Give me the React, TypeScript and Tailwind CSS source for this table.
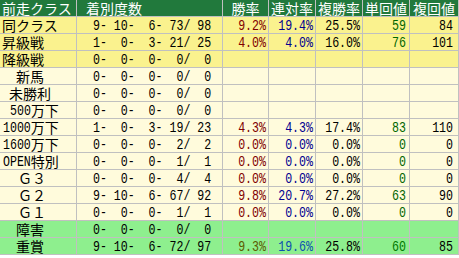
import React from 'react';

interface Row {
  label: string;
  pl: string;
  bg: string;
  rec: string;
  win?: string;
  ren?: string;
  fuku?: string;
  tan?: string;
  fk?: string;
  green?: boolean;
}

const zero = ' 0-  0-  0-  0/  0';

const rows: Row[] = [
  { label: '同クラス', pl: 'pl-[2px]', bg: 'bg-[#faf28e]', rec: ' 9- 10-  6- 73/ 98', win: '9.2%', ren: '19.4%', fuku: '25.5%', tan: '59', fk: '84' },
  { label: '昇級戦', pl: 'pl-[2px]', bg: 'bg-[#faf28e]', rec: ' 1-  0-  3- 21/ 25', win: '4.0%', ren: '4.0%', fuku: '16.0%', tan: '76', fk: '101' },
  { label: '降級戦', pl: 'pl-[2px]', bg: 'bg-[#faf28e]', rec: zero },
  { label: '新馬', pl: 'pl-[16px]', bg: 'bg-[#fffbdc]', rec: zero },
  { label: '未勝利', pl: 'pl-[9px]', bg: 'bg-[#fffbdc]', rec: zero },
  { label: '500万下', pl: 'pl-[10px]', bg: 'bg-[#fffbdc]', rec: zero },
  { label: '1000万下', pl: 'pl-[3px]', bg: 'bg-[#fffbdc]', rec: ' 1-  0-  3- 19/ 23', win: '4.3%', ren: '4.3%', fuku: '17.4%', tan: '83', fk: '110' },
  { label: '1600万下', pl: 'pl-[3px]', bg: 'bg-[#fffbdc]', rec: ' 0-  0-  0-  2/  2', win: '0.0%', ren: '0.0%', fuku: '0.0%', tan: '0', fk: '0' },
  { label: 'OPEN特別', pl: 'pl-[3px]', bg: 'bg-[#fffbdc]', rec: ' 0-  0-  0-  1/  1', win: '0.0%', ren: '0.0%', fuku: '0.0%', tan: '0', fk: '0' },
  { label: 'Ｇ３', pl: 'pl-[18px]', bg: 'bg-[#fffbdc]', rec: ' 0-  0-  0-  4/  4', win: '0.0%', ren: '0.0%', fuku: '0.0%', tan: '0', fk: '0' },
  { label: 'Ｇ２', pl: 'pl-[18px]', bg: 'bg-[#fffbdc]', rec: ' 9- 10-  6- 67/ 92', win: '9.8%', ren: '20.7%', fuku: '27.2%', tan: '63', fk: '90' },
  { label: 'Ｇ１', pl: 'pl-[18px]', bg: 'bg-[#fffbdc]', rec: ' 0-  0-  0-  1/  1', win: '0.0%', ren: '0.0%', fuku: '0.0%', tan: '0', fk: '0' },
  { label: '障害', pl: 'pl-[16px]', bg: 'bg-[#8eef8e]', rec: zero, green: true },
  { label: '重賞', pl: 'pl-[16px]', bg: 'bg-[#8eef8e]', rec: ' 9- 10-  6- 72/ 97', win: '9.3%', ren: '19.6%', fuku: '25.8%', tan: '60', fk: '85', green: true },
];

// fixed-width numbers, stretched a bit to look like the tall narrow original digits
function Mono({ text }: { text: string }) {
  return (
    <span className="inline-block whitespace-pre font-['Liberation_Mono',monospace] text-[11.6px] leading-[13px] scale-y-[1.25]">
      {text}
    </span>
  );
}

// half-width parts of a label in the fixed-width face, the rest as is
function Label({ text }: { text: string }) {
  return (
    <>
      {text.split(/([0-9A-Za-z]+)/).filter(Boolean).map((p, i) =>
        /^[0-9A-Za-z]+$/.test(p) ? <Mono key={i} text={p} /> : <span key={i}>{p}</span>
      )}
    </>
  );
}

const cols = 'grid grid-cols-[77px_146px_46px_47px_47px_47px_49px]';
const cell = 'h-[17px] border-r border-b border-[#c0c0c0] flex items-center whitespace-nowrap';

function App() {
  return (
    <div className="w-[459px] h-[258px] bg-white font-['Noto_Sans_CJK_JP',sans-serif] text-[14px] leading-[16px] text-black">
      <div className={`${cols} bg-[#21793c] text-white`}>
        <div className={`${cell} pl-[2px]`}>前走クラス</div>
        <div className={`${cell} pl-[9px]`}>着別度数</div>
        <div className={`${cell} justify-center`}>勝率</div>
        <div className={`${cell} justify-center`}>連対率</div>
        <div className={`${cell} justify-center`}>複勝率</div>
        <div className={`${cell} justify-center`}>単回値</div>
        <div className={`${cell} justify-center`}>複回値</div>
      </div>
      {rows.map((r) => (
        <div key={r.label} className={`${cols} ${r.bg}`}>
          <div className={`${cell} ${r.pl}`}>
            <Label text={r.label} />
          </div>
          <div className={`${cell} pl-[9px]`}>
            <Mono text={r.rec} />
          </div>
          <div className={`${cell} justify-end pr-[2px] ${r.green ? 'text-[#5c5a00]' : 'text-[#800000]'}`}>
            {r.win && <Mono text={r.win} />}
          </div>
          <div className={`${cell} justify-end pr-[2px] ${r.green ? 'text-[#0a50b0]' : 'text-[#000090]'}`}>
            {r.ren && <Mono text={r.ren} />}
          </div>
          <div className={`${cell} justify-end pr-[2px]`}>
            {r.fuku && <Mono text={r.fuku} />}
          </div>
          <div className={`${cell} justify-end pr-[3px] ${r.green ? 'text-[#007a00]' : 'text-[#006600]'}`}>
            {r.tan && <Mono text={r.tan} />}
          </div>
          <div className={`${cell} justify-end pr-[5px]`}>
            {r.fk && <Mono text={r.fk} />}
          </div>
        </div>
      ))}
    </div>
  );
}

export default App;
